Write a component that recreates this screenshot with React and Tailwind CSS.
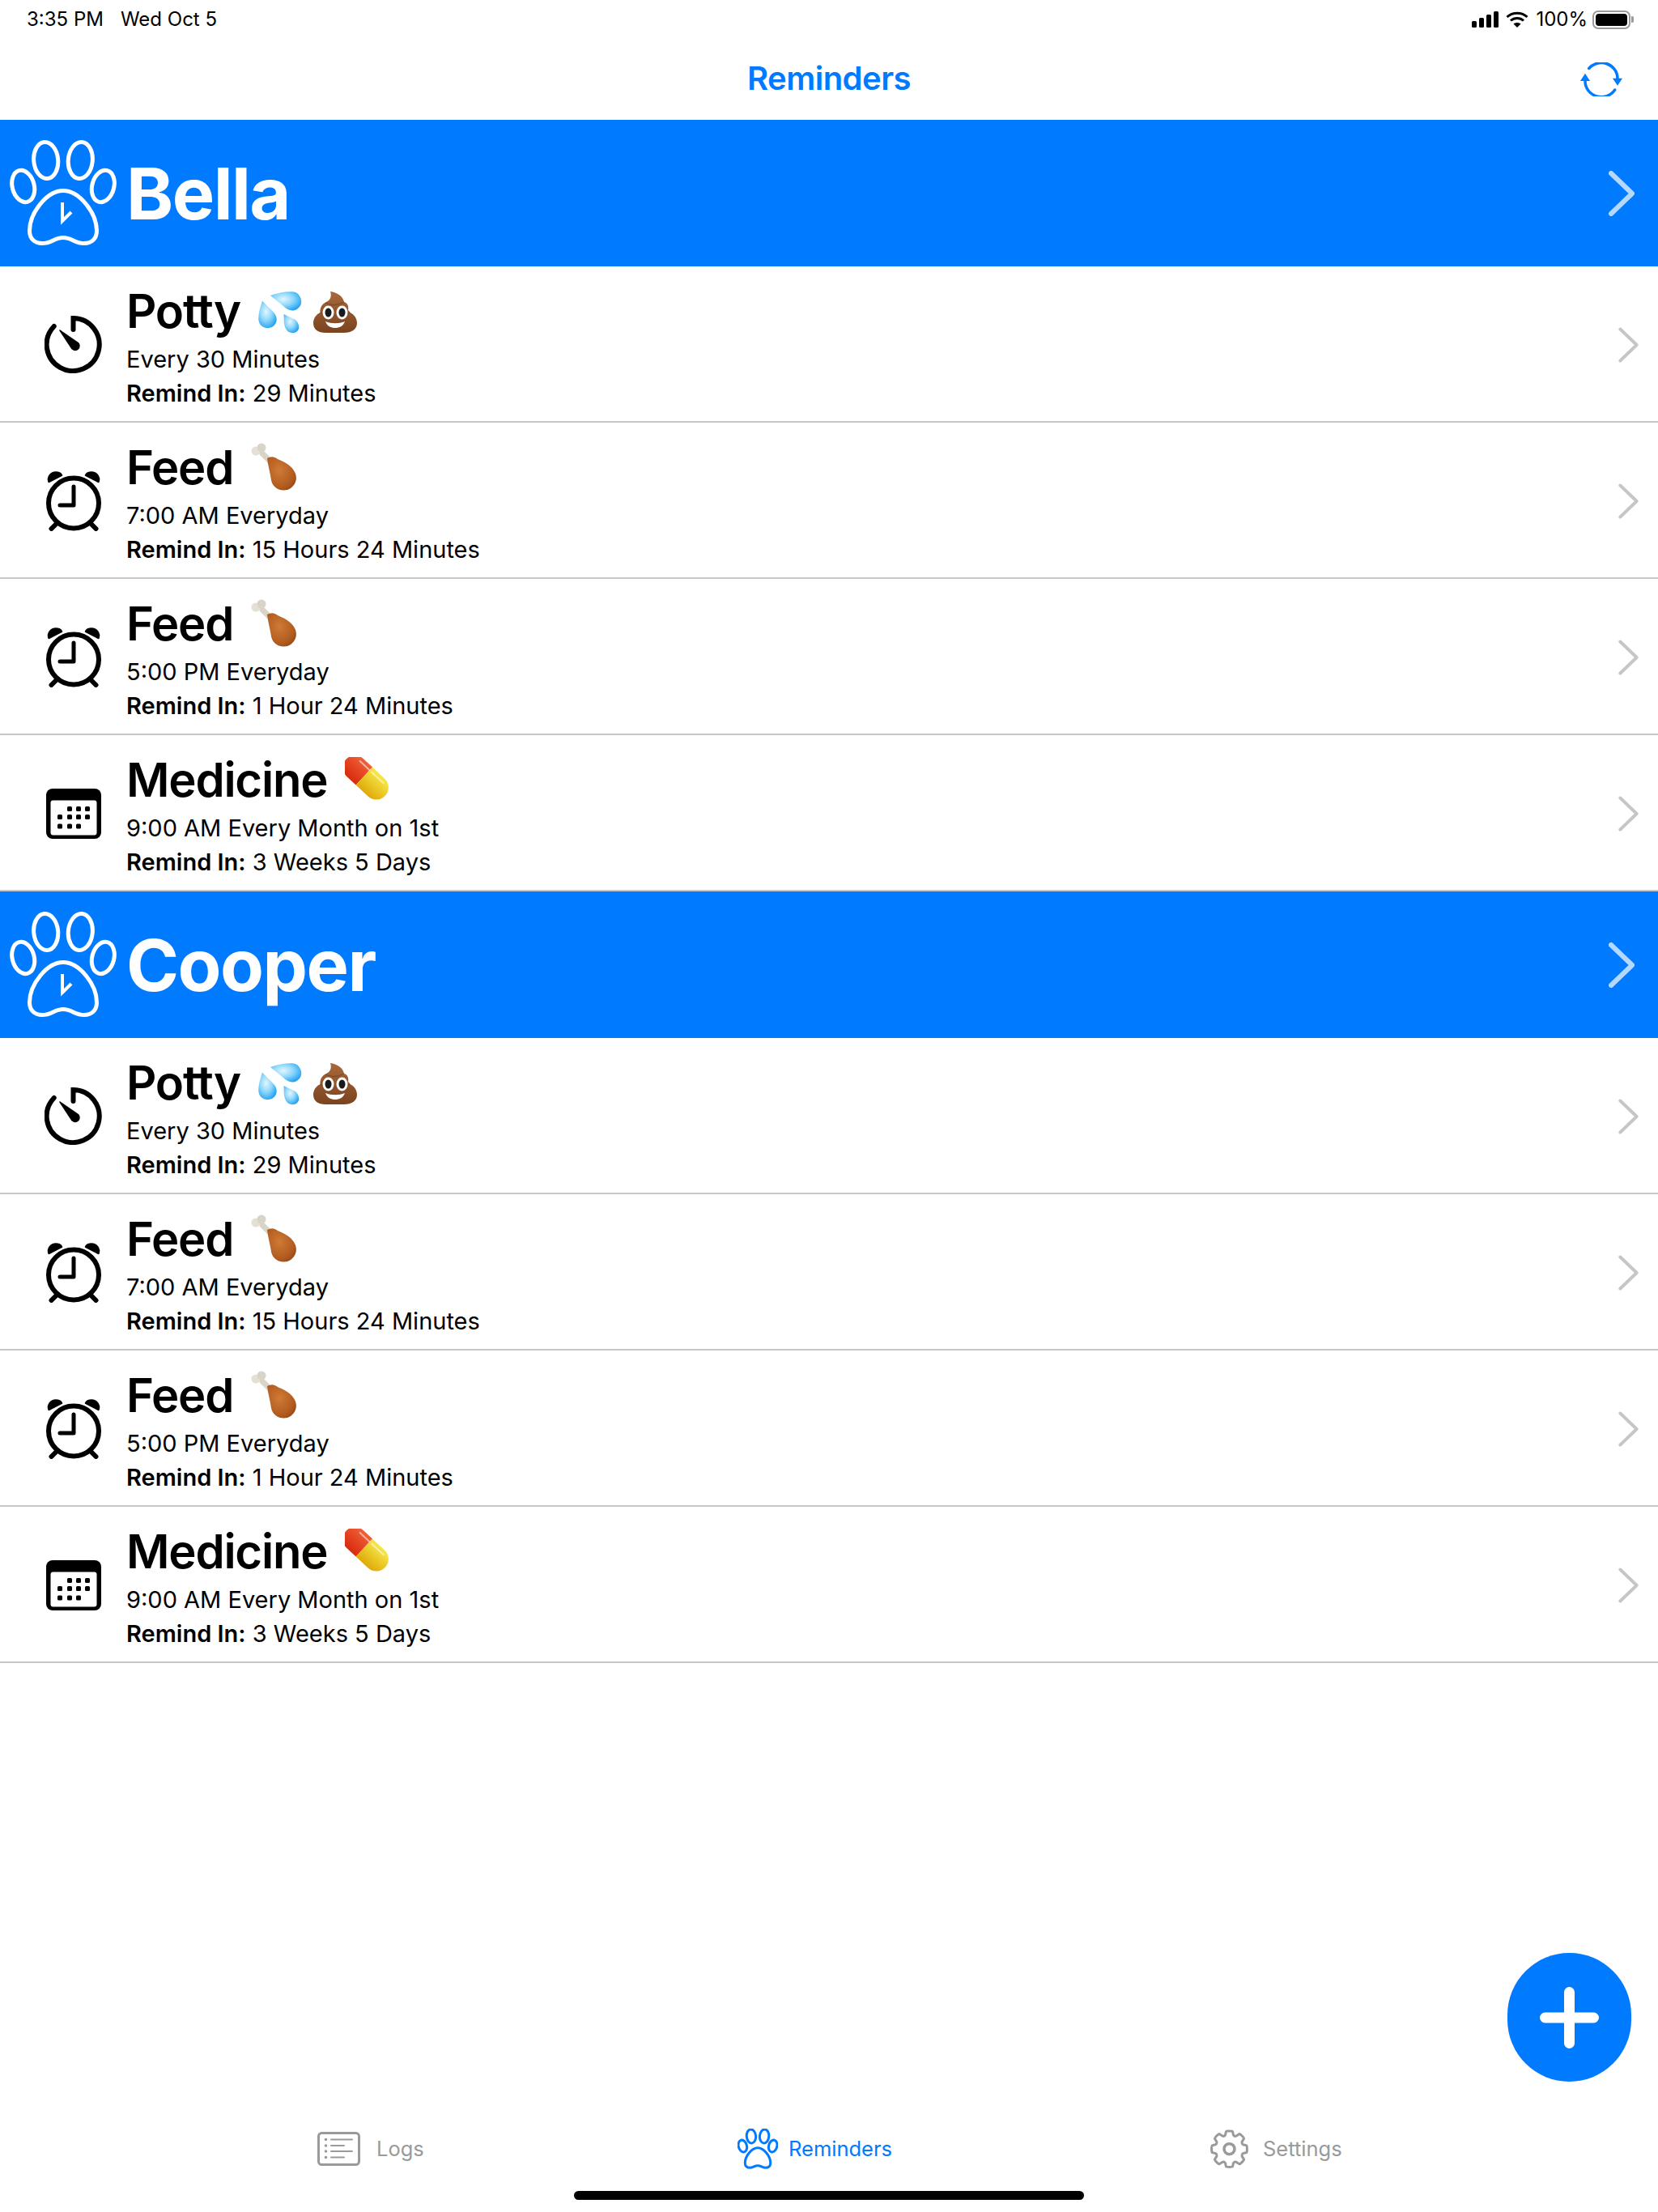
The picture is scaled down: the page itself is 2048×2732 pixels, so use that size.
import React from "react";

const FONT = "font-['Inter','Liberation_Sans',sans-serif]";

function Paw({ className, clock, sw }) {
  return (
    <svg viewBox="0 0 132 132" className={className} fill="none" stroke="currentColor" strokeWidth={sw}>
      <ellipse cx="16.7" cy="57" rx="13.5" ry="20" transform="rotate(-15 16.7 57)" />
      <ellipse cx="44.7" cy="25" rx="15" ry="22.5" transform="rotate(-5 44.7 25)" />
      <ellipse cx="87.3" cy="25" rx="15" ry="22.5" transform="rotate(5 87.3 25)" />
      <ellipse cx="115.3" cy="57" rx="13.5" ry="20" transform="rotate(15 115.3 57)" />
      <path d="M66 62.5C46 62.5 24.5 90 24.5 112C24.5 122 31 127.5 40 127.5C52 127.5 55 120.5 66 120.5C77 120.5 80 127.5 92 127.5C101 127.5 107.5 122 107.5 112C107.5 90 86 62.5 66 62.5Z" />
      {clock && <path d="M65 77V100L76 89" strokeWidth="4" />}
    </svg>
  );
}

function Chevron({ className, sw }) {
  return (
    <svg viewBox="0 0 32 56" className={className} fill="none" stroke="currentColor" strokeWidth={sw} strokeLinecap="round" strokeLinejoin="round">
      <path d="M3 3L29 28L3 53" />
    </svg>
  );
}

function TimerIcon() {
  return (
    <svg viewBox="0 0 71 71" className="w-[71px] h-[71px]" fill="none" stroke="#000" strokeWidth="6" strokeLinecap="round">
      <path d="M35.5 17V3A32.5 32.5 0 1 1 11.7 13" />
      <path d="M19 18L41.5 33.5A5 5 0 0 1 34 40.8Z" fill="#000" stroke="#000" strokeWidth="1.5" strokeLinejoin="round" />
    </svg>
  );
}

function AlarmIcon() {
  return (
    <svg viewBox="0 0 68 74" className="w-[68px] h-[74px]" fill="none" stroke="#000" strokeWidth="6" strokeLinecap="round" strokeLinejoin="round">
      <circle cx="34" cy="39.5" r="31" />
      <path d="M34 19V42H17" strokeWidth="5" />
      <path d="M3.5 13C1.5 7 6 1.5 12 1.5C15 1.5 18 3 19 5Z" fill="#000" strokeWidth="2.5" />
      <path d="M64.5 13C66.5 7 62 1.5 56 1.5C53 1.5 50 3 49 5Z" fill="#000" strokeWidth="2.5" />
      <path d="M6.5 71L12.5 65M61.5 71L55.5 65" strokeWidth="6" />
    </svg>
  );
}

function CalendarIcon() {
  const dots = [[29, 25], [40, 25], [51, 25], [17, 35], [29, 35], [40, 35], [51, 35], [17, 46.5], [29, 46.5], [40, 46.5]];
  return (
    <svg viewBox="0 0 68 62" className="w-[68px] h-[62px]">
      <rect width="68" height="62" rx="8" fill="#000" />
      <rect x="5.5" y="14.5" width="57" height="43" rx="3" fill="#fff" />
      {dots.map(([x, y], i) => (
        <rect key={i} x={x - 3} y={y - 3} width="6" height="6" rx="1.5" fill="#000" />
      ))}
    </svg>
  );
}

function Droplets() {
  return (
    <svg viewBox="0 0 54 52" className="w-[54px] h-[52px]">
      <defs>
        <radialGradient id="drop" cx="0.42" cy="0.4" r="0.72">
          <stop offset="0" stopColor="#e4f6ff" />
          <stop offset="0.45" stopColor="#8ed8fb" />
          <stop offset="1" stopColor="#0f95ee" />
        </radialGradient>
      </defs>
      <g fill="url(#drop)">
        <path d="M15 5C25 1 37-.5 44 .5C52 2 56 13 51 19C45 26 37 24 31 18C26 14 20 9 15 5Z" />
        <path d="M5 11.5C2 21-.5 29 .5 36C2 44 10 47 17 44C24 40 24 32 20 27C15 21 9 16 5 11.5Z" />
        <path d="M31.5 28C32 34 31 40 34 46C37 52 45 53 49 48C52 43 49 38 46 35C41 33 36 30 31.5 28Z" />
      </g>
    </svg>
  );
}

function Poop() {
  return (
    <svg viewBox="0 0 54 51" className="w-[54px] h-[51px]">
      <defs>
        <linearGradient id="poo" x1="0" y1="0" x2="0" y2="1">
          <stop offset="0" stopColor="#a9683a" />
          <stop offset="1" stopColor="#7a4420" />
        </linearGradient>
      </defs>
      <path d="M21 0C29 1 37 6 38 13C42 14 44 18 43 23C44 24 45 25 45.5 26C50 28 54 33 54 39C54 47 47 51 38 51H15C6 51 0 47 0 39C0 33 4 28 8.5 26C8 20 11 15 16 13C21 11 23 6 21 0Z" fill="url(#poo)" />
      <path d="M15 14C22 18 30 17 38 13M9 26C12 28 14 28.500 16 29M36 29C39 28.500 42 28 45 26" fill="none" stroke="#6c3b1a" strokeWidth="1.2" opacity=".6" />
      <ellipse cx="18.500" cy="26" rx="7" ry="8.500" fill="#fff" />
      <ellipse cx="35.500" cy="26" rx="7" ry="8.500" fill="#fff" />
      <ellipse cx="18.500" cy="26" rx="4" ry="5.500" fill="#1a1a1a" />
      <ellipse cx="35.500" cy="26" rx="4" ry="5.500" fill="#1a1a1a" />
      <path d="M15 37C22 40 32 40 39 37C37 43 32 45 27 45C22 45 17 43 15 37Z" fill="#fff" />
    </svg>
  );
}

function Drumstick() {
  return (
    <svg viewBox="0 0 57 59" className="w-[57px] h-[59px]">
      <defs>
        <radialGradient id="meat" cx="0.42" cy="0.4" r="0.75">
          <stop offset="0" stopColor="#d07a35" />
          <stop offset="0.7" stopColor="#b05a1f" />
          <stop offset="1" stopColor="#8a4012" />
        </radialGradient>
      </defs>
      <path d="M14 13L24 23" stroke="#d8d4c8" strokeWidth="7" strokeLinecap="round" />
      <circle cx="6" cy="10" r="5.500" fill="#e4e0d6" />
      <circle cx="13" cy="6" r="5.500" fill="#d8d4c8" />
      <path d="M20 19C24 17 28 16 33 20C42 24 51 28 55 38C58 47 53 55 45 58C36 60 27 56 25 46C24 38 21 28 20 19Z" fill="url(#meat)" />
    </svg>
  );
}

function Pill() {
  return (
    <svg viewBox="0 0 55 54" className="w-[55px] h-[54px]">
      <defs>
        <linearGradient id="red" x1="0" y1="0" x2="0" y2="1">
          <stop offset="0" stopColor="#f0603a" />
          <stop offset="1" stopColor="#d82a0c" />
        </linearGradient>
        <linearGradient id="yel" x1="0" y1="0" x2="0" y2="1">
          <stop offset="0" stopColor="#f7e84a" />
          <stop offset="1" stopColor="#dfa908" />
        </linearGradient>
      </defs>
      <g transform="rotate(43 27.5 27)">
        <path d="M27.5 12H12A15 15 0 0 0 12 42H27.5Z" fill="url(#red)" transform="translate(-5 0)" />
        <path d="M22.5 12H43A15 15 0 0 1 43 42H22.5Z" fill="url(#yel)" />
        <path d="M6 17H22M26 17H46" stroke="#fff" strokeWidth="2" strokeLinecap="round" opacity=".55" />
      </g>
    </svg>
  );
}

function Row({ icon, title, emoji, emojiTop, line, remind }) {
  return (
    <div className="flex items-start h-[193px] border-b-2 border-[#c8c8ca] bg-white">
      <div className="w-[71px] ml-[55px] mr-[30px] h-full flex items-center justify-center pt-[2px]">{icon}</div>
      <div className="flex-1 pt-[18px]">
        <div className="flex items-start gap-[22px] h-[76px]">
          <span className="text-[58px] leading-[74px] font-semibold text-black tracking-[-1.2px]">{title}</span>
          <span className={`flex items-start gap-[14px] ${emojiTop}`}>{emoji}</span>
        </div>
        <div className="text-[29px] leading-[42px] text-black">{line}</div>
        <div className="text-[29px] leading-[42px] text-black">
          <span className="font-semibold">Remind In:</span> {remind}
        </div>
      </div>
      <div className="h-full flex items-center pr-[24px] pt-[3px] text-[#c6c6c8]">
        <Chevron className="w-[25px] h-[46px]" sw="5" />
      </div>
    </div>
  );
}

function Header({ name }) {
  return (
    <div className="flex items-center h-[181px] bg-[#007aff] text-white">
      <Paw className="w-[132px] h-[132px] ml-[12px]" clock sw="5" />
      <span className="ml-[12px] flex-1 text-[88px] leading-none font-bold tracking-[-1.5px]">{name}</span>
      <div className="pr-[29px] text-[#b5d8ff]">
        <Chevron className="w-[32px] h-[56px]" sw="6" />
      </div>
    </div>
  );
}

function Group({ name }) {
  return (
    <div>
      <Header name={name} />
      <Row icon={<TimerIcon />} title="Potty" emojiTop="mt-[13px]" emoji={<><Droplets /><Poop /></>} line="Every 30 Minutes" remind="29 Minutes" />
      <Row icon={<AlarmIcon />} title="Feed" emojiTop="mt-[7px]" emoji={<Drumstick />} line="7:00 AM Everyday" remind="15 Hours 24 Minutes" />
      <Row icon={<AlarmIcon />} title="Feed" emojiTop="mt-[7px]" emoji={<Drumstick />} line="5:00 PM Everyday" remind="1 Hour 24 Minutes" />
      <Row icon={<CalendarIcon />} title="Medicine" emojiTop="mt-[9px]" emoji={<Pill />} line="9:00 AM Every Month on 1st" remind="3 Weeks 5 Days" />
    </div>
  );
}

function StatusBar() {
  return (
    <div className="flex items-center h-[48px] pl-[33px] pr-[30px] text-[24px] text-black">
      <span>3:35 PM</span>
      <span className="ml-[21px] flex-1">Wed Oct 5</span>
      <svg viewBox="0 0 33 20" className="w-[33px] h-[20px]">
        <rect x="0" y="12" width="6" height="8" rx="1.5" />
        <rect x="9" y="8" width="6" height="12" rx="1.5" />
        <rect x="18" y="4" width="6" height="16" rx="1.5" />
        <rect x="27" y="0" width="6" height="20" rx="1.5" />
      </svg>
      <svg viewBox="0 0 28 20" className="w-[28px] h-[20px] ml-[9px]" fill="none" stroke="#000" strokeWidth="3">
        <path d="M1.5 7C8.5 .5 19.5 .5 26.5 7" />
        <path d="M6 11.5C10.5 7.5 17.5 7.5 22 11.5" />
        <path d="M14 20L9.5 15.5C12 13.5 16 13.5 18.5 15.5Z" fill="#000" stroke="none" />
      </svg>
      <span className="ml-[9px]">100%</span>
      <div className="ml-[6px] flex items-center">
        <div className="w-[47px] h-[23px] rounded-[7px] border-2 border-[#9a9a9a] p-[2px]">
          <div className="w-full h-full rounded-[4px] bg-black" />
        </div>
        <div className="w-[3px] h-[8px] rounded-r-[2px] bg-[#9a9a9a] ml-[1px]" />
      </div>
    </div>
  );
}

function NavBar() {
  return (
    <div className="relative flex items-center justify-center h-[100px] pb-[3px]">
      <span className="text-[40px] font-semibold text-[#007aff] tracking-[-0.5px]">Reminders</span>
      <svg viewBox="0 0 52 42" className="absolute left-[1952px] top-[29px] w-[52px] h-[42px]" fill="none" stroke="#007aff" strokeWidth="3.5" strokeLinecap="round">
        <path d="M10.7 7.5A20 19.5 0 0 1 46 20" />
        <path d="M6 23A20 19.5 0 0 0 42.7 34" />
        <path d="M40 19.7H52L46 28.7Z" fill="#007aff" stroke="none" />
        <path d="M0 23H12L6 13.7Z" fill="#007aff" stroke="none" />
      </svg>
    </div>
  );
}

function LogsIcon() {
  return (
    <svg viewBox="0 0 53 42" className="w-[53px] h-[42px]" fill="none" stroke="#9a9a9a">
      <rect x="1.5" y="1.5" width="50" height="39" rx="4" strokeWidth="3" />
      <g strokeWidth="2" strokeLinecap="round">
        <path d="M17 9.5H43M17 17H33M17 24H43M17 31.5H33" />
      </g>
      <g fill="#9a9a9a" stroke="none">
        <circle cx="10.5" cy="9.5" r="1.8" />
        <circle cx="10.5" cy="17" r="1.8" />
        <circle cx="10.5" cy="24" r="1.8" />
        <circle cx="10.5" cy="31.5" r="1.8" />
      </g>
    </svg>
  );
}

function GearIcon() {
  return (
    <svg viewBox="0 0 49 49" className="w-[49px] h-[49px]" fill="none" stroke="#9a9a9a" strokeWidth="3" strokeLinejoin="round">
      <path d="M20.5 2.5C21 1.8 28 1.8 28.5 2.5L29.5 6.8C30.3 8 32 8.6 33.2 8L37 5.6C38 5.4 42.8 10.4 42.6 11.2L40.3 15C39.7 16.2 40.3 18 41.5 18.8L45.8 19.9C46.6 20.4 46.6 28 45.8 28.5L41.5 29.6C40.3 30.4 39.7 32.2 40.3 33.4L42.6 37.2C42.8 38 38 43 37 42.8L33.2 40.4C32 39.8 30.3 40.4 29.5 41.6L28.5 46C28 46.7 21 46.7 20.5 46L19.5 41.6C18.7 40.4 17 39.8 15.8 40.4L12 42.8C11 43 6.2 38 6.4 37.2L8.7 33.4C9.3 32.2 8.7 30.4 7.5 29.6L3.2 28.5C2.4 28 2.4 20.4 3.2 19.9L7.5 18.8C8.7 18 9.3 16.2 8.7 15L6.4 11.2C6.2 10.4 11 5.4 12 5.6L15.8 8C17 8.6 18.7 8 19.5 6.8Z" />
      <circle cx="24.5" cy="24.2" r="6.5" strokeWidth="3.5" />
    </svg>
  );
}

function TabBar() {
  return (
    <div className="grid grid-cols-[519px_583px_1fr] pl-[392px] items-center h-[74px] mt-[auto] text-[25.5px] text-[#9a9a9a]">
      <div className="flex items-center gap-[20px]">
        <LogsIcon />
        <span>Logs</span>
      </div>
      <div className="flex items-center gap-[13px] text-[#007aff]">
        <Paw className="w-[50px] h-[50px]" sw="8" />
        <span>Reminders</span>
      </div>
      <div className="flex items-center gap-[17px]">
        <GearIcon />
        <span>Settings</span>
      </div>
    </div>
  );
}

export default function App() {
  return (
    <div className={`${FONT} relative flex flex-col w-[2048px] h-[2732px] bg-white overflow-hidden`}>
      <StatusBar />
      <NavBar />
      <Group name="Bella" />
      <Group name="Cooper" />
      <TabBar />
      <div className="flex justify-center pt-[15px] pb-[15px]">
        <div className="w-[630px] h-[11px] rounded-full bg-black" />
      </div>
      <div className="absolute left-[1862px] top-[2412px] w-[153px] h-[159px] rounded-full bg-[#007aff] flex items-center justify-center">
        <svg viewBox="0 0 73 76" className="w-[73px] h-[76px]" fill="none" stroke="#fff" strokeWidth="13" strokeLinecap="round">
          <path d="M36.5 6.5V69.5M6.5 38H66.5" />
        </svg>
      </div>
    </div>
  );
}
